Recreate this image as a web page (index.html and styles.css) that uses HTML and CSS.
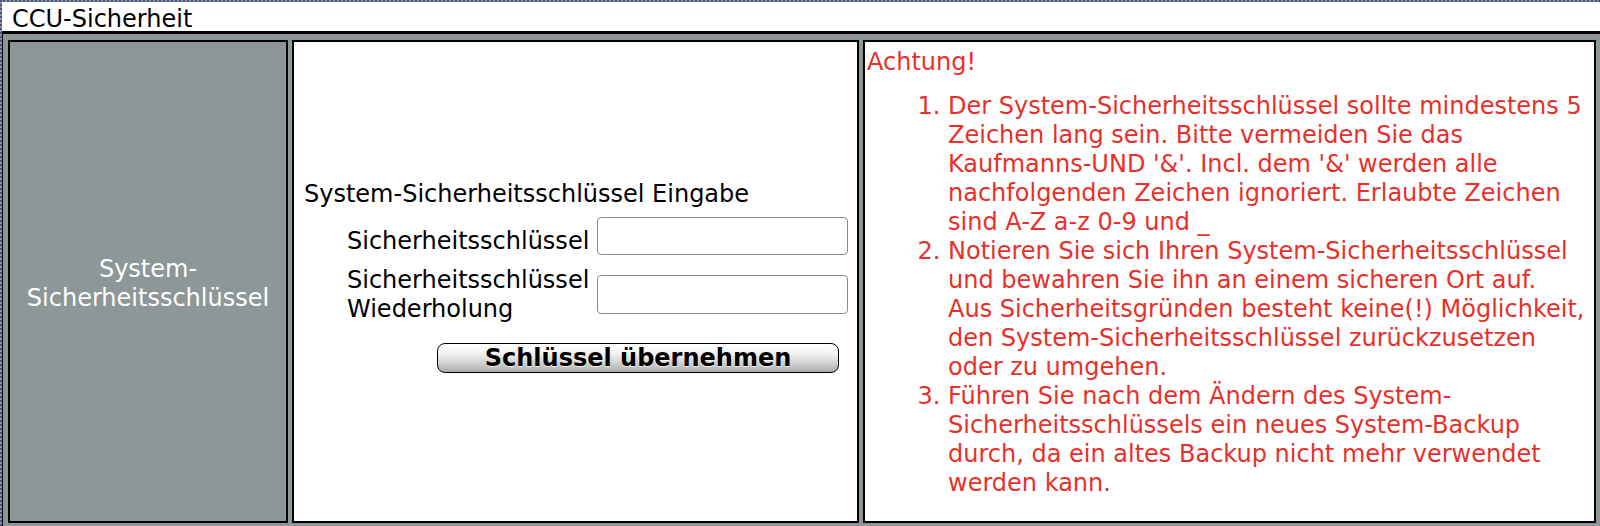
FILE: index.html
```html
<!DOCTYPE html>
<html lang="de">
<head>
<meta charset="utf-8">
<title>CCU-Sicherheit</title>
<link rel="stylesheet" href="styles.css">
</head>
<body>
<div class="frame">
  <div class="titlebar">CCU-Sicherheit</div>
  <div class="content">
    <div class="cell cell-side">
      <span class="side-label">System-Sicherheitsschlüssel</span>
    </div>
    <div class="cell cell-form">
      <div class="form">
        <div class="form-title">System-Sicherheitsschlüssel Eingabe</div>
        <label class="form-label form-label-1" for="key1">Sicherheitsschlüssel</label>
        <input class="form-input form-input-1" id="key1" type="password">
        <label class="form-label form-label-2" for="key2">Sicherheitsschlüssel<br>Wiederholung</label>
        <input class="form-input form-input-2" id="key2" type="password">
        <button class="form-button" type="button">Schlüssel übernehmen</button>
      </div>
    </div>
    <div class="cell cell-hint">
      <div class="hint-title">Achtung!</div>
      <ol class="hint-list">
        <li>Der System-Sicherheitsschlüssel sollte mindestens 5<br>Zeichen lang sein. Bitte vermeiden Sie das<br>Kaufmanns-UND '&amp;'. Incl. dem '&amp;' werden alle<br>nachfolgenden Zeichen ignoriert. Erlaubte Zeichen<br>sind A-Z a-z 0-9 und _</li>
        <li>Notieren Sie sich Ihren System-Sicherheitsschlüssel<br>und bewahren Sie ihn an einem sicheren Ort auf.<br>Aus Sicherheitsgründen besteht keine(!) Möglichkeit,<br>den System-Sicherheitsschlüssel zurückzusetzen<br>oder zu umgehen.</li>
        <li>Führen Sie nach dem Ändern des System-<br>Sicherheitsschlüssels ein neues System-Backup<br>durch, da ein altes Backup nicht mehr verwendet<br>werden kann.</li>
      </ol>
    </div>
  </div>
</div>
</body>
</html>
```

FILE: styles.css
```css
html, body {
  margin: 0;
  padding: 0;
  width: 1600px;
  height: 526px;
  overflow: hidden;
  background: #8d9797;
}

body {
  font-family: "DejaVu Sans", Verdana, sans-serif;
  font-size: 24px;
  line-height: 29px;
  color: #000;
}

.frame {
  height: 526px;
  box-sizing: border-box;
  border-top: 2px dotted #4b5190;
  border-left: 2px dotted #4b5190;
  display: flex;
  flex-direction: column;
}

.titlebar {
  height: 26px;
  padding-top: 3px;
  background: #fff;
  border-bottom: 3px solid #000;
  padding-left: 10px;
  line-height: 29px;
  color: #000;
}

.content {
  flex: 1;
  display: grid;
  grid-template-columns: 280px 567px 733px;
  column-gap: 4px;
  padding: 6px 4px 3px 5px;
  border-left: 1px solid #000;
  background: #8d9797;
  min-height: 0;
}

.cell {
  border: 2px solid #000;
  box-sizing: border-box;
}

.cell-side {
  background: #8d9797;
  color: #fff;
  display: flex;
  align-items: center;
  justify-content: center;
  text-align: center;
  padding: 4px 2px 0;
}

.cell-form {
  background: #fff;
  display: flex;
  align-items: center;
  justify-content: flex-start;
  padding: 0 0 11px 10px;
}

.form {
  display: grid;
  grid-template-columns: 43px 243px 258px;
  width: 544px;
}

.form-title {
  grid-column: 1 / 4;
  white-space: nowrap;
}

.form-label {
  grid-column: 2;
  white-space: nowrap;
}

.form-label-1 {
  margin-top: 18px;
}

.form-input {
  grid-column: 3;
  justify-self: end;
  box-sizing: border-box;
  width: 251px;
  border: 1px solid #8a8a8a;
  border-radius: 4px;
  background: #fff;
  margin: 0;
  padding: 0 4px;
  font: inherit;
}

.form-input-1 {
  height: 38px;
  margin-top: 8px;
  align-self: start;
}

.form-label-2 {
  margin-top: 10px;
}

.form-input-2 {
  height: 39px;
  margin-top: 19px;
  align-self: start;
}

.form-button {
  grid-column: 1 / 4;
  justify-self: end;
  margin: 19px 9px 0 0;
  width: 402px;
  height: 30px;
  box-sizing: border-box;
  border: 1px solid #000;
  border-radius: 8px;
  background: linear-gradient(to bottom, #ffffff 0%, #f2f2f2 35%, #c9c9c9 75%, #a9a9a9 100%);
  font-family: "DejaVu Sans", Verdana, sans-serif;
  font-weight: bold;
  font-size: 24px;
  line-height: 26px;
  color: #000;
  text-shadow: 0 1px 1px rgba(255, 255, 255, 0.8);
  padding: 0;
}

.cell-hint {
  background: #fff;
  color: #e8302a;
  padding: 6px 0 0 2px;
}

.hint-list {
  margin: 15px 0 0 0;
  padding-left: 81px;
}

.hint-list li {
  white-space: nowrap;
  padding-left: 0;
}

.hint-list li::marker {
  letter-spacing: 0;
}
```
